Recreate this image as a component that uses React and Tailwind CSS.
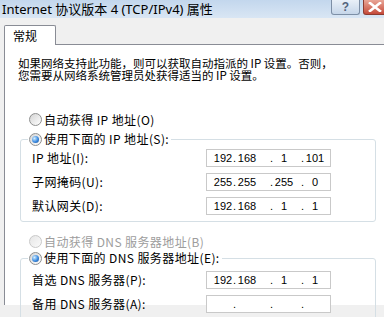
import React from 'react';

const cjk = "font-['Noto_Sans_CJK_SC',sans-serif]";

const Radio = ({ checked, disabled }) => (
  <span
    className={
      disabled
        ? 'flex h-[13px] w-[13px] shrink-0 items-center justify-center rounded-full border border-[#c9c9c9] bg-gradient-to-br from-[#e6e6e6] to-[#fafafa]'
        : 'flex h-[13px] w-[13px] shrink-0 items-center justify-center rounded-full border border-[#8e8f8f] bg-gradient-to-br from-[#d4d4d4] to-[#ffffff]'
    }
  >
    {checked && (
      <span className="h-[7px] w-[7px] rounded-full bg-[radial-gradient(circle_at_35%_35%,#d6f0ff,#3b8ae0_55%,#174a8c)]" />
    )}
  </span>
);

const RadioRow = ({ label, checked, disabled, className = '' }) => (
  <div className={`flex h-[16px] items-center gap-[2px] ${className}`}>
    <Radio checked={checked} disabled={disabled} />
    <span className={disabled ? 'whitespace-nowrap tracking-[0.4px] text-[#9d9d9d]' : 'whitespace-nowrap tracking-[0.4px] text-black'}>
      {label}
    </span>
  </div>
);

const IpBox = ({ parts = ['', '', '', ''] }) => (
  <div className="flex h-[18px] w-[125px] shrink-0 items-center border border-[#c9c9c9] bg-white pl-[6px] font-['Liberation_Sans',sans-serif] text-[11px] leading-[16px] text-black">
    <span className="w-[20px] text-center">{parts[0]}</span>
    <span className="w-[4px]">.</span>
    <span className="w-[20px] text-center">{parts[1]}</span>
    <span className="ml-[13px] w-[4px]">.</span>
    <span className="w-[20px] text-center">{parts[2]}</span>
    <span className="ml-[7px] w-[4px]">.</span>
    <span className="w-[20px] text-center">{parts[3]}</span>
  </div>
);

const Row = ({ label, parts }) => (
  <div className="flex h-[18px] items-center">
    <span className="w-[174px] whitespace-nowrap tracking-[0.4px]">{label}</span>
    <IpBox parts={parts} />
  </div>
);

const Group = ({ legend, className = '', children }) => (
  <fieldset className={`ml-[15px] w-[356px] rounded-[3px] border border-[#d5dfe5] pb-[6px] pl-[11px] ${className}`}>
    <legend className="-ml-[4px] pl-[1px] pr-[2px]">
      <RadioRow label={legend} checked />
    </legend>
    {children}
  </fieldset>
);

export default function App() {
  return (
    <div className={`h-[317px] w-[384px] overflow-hidden bg-[#f0f0f0] text-[12px] leading-[12px] text-black ${cjk}`}>
      {/* title bar */}
      <div className="flex h-[18px] items-start overflow-hidden bg-gradient-to-b from-[#c3d7ed] to-[#d9e6f4]">
        <div className="min-w-0 flex-1 whitespace-nowrap pl-[2px] pt-[1px] font-['Noto_Sans','Noto_Sans_CJK_SC',sans-serif] text-[13px] leading-[16px] text-black">
          Internet 协议版本 4 (TCP/IPv4) 属性
        </div>
        <div className="flex h-[15px] w-[29px] shrink-0 items-center justify-center rounded-b-[3px] border border-t-0 border-[#7d8fa6] bg-gradient-to-b from-[#e9f0f8] to-[#c6d6e9] font-['Liberation_Sans',sans-serif] text-[12px] font-bold leading-none text-[#53647c]">
          ?
        </div>
        <div className="-mr-[3px] ml-[3px] flex h-[15px] w-[24px] shrink-0 items-center justify-center rounded-b-[3px] border border-t-0 border-[#8d3b30] bg-gradient-to-b from-[#e8a597] to-[#c4493a]">
          <svg width="14" height="10" viewBox="0 0 14 10">
            <path d="M2 1 L12 9 M12 1 L2 9" stroke="#ffffff" strokeWidth="2.6" strokeLinecap="square" />
          </svg>
        </div>
      </div>

      {/* tabs */}
      <div className="mt-[7px] flex h-[20px]">
        <div className="ml-[4px] flex w-[52px] items-center rounded-t-[2px] border border-b-0 border-[#898c95] bg-white pl-[8px]">
          常规
        </div>
        <div className="flex-1 border-b border-[#898c95]" />
      </div>

      {/* page */}
      <div className="ml-[4px] flex h-[260px] flex-col border-l border-[#898c95] bg-white">
        <div className="ml-[13px] mt-[12px] flex flex-col whitespace-nowrap text-[11.5px]">
          <div className="h-[12px] leading-[12px]">如果网络支持此功能，则可以获取自动指派的 IP 设置。否则，</div>
          <div className="h-[12px] leading-[12px]">您需要从网络系统管理员处获得适当的 IP 设置。</div>
        </div>

        <RadioRow className="ml-[24px] mt-[32px]" label="自动获得 IP 地址(O)" />

        <Group className="mt-[5px]" legend="使用下面的 IP 地址(S):">
          <div className="mt-[2px] flex flex-col gap-[6px]">
            <Row label="IP 地址(I):" parts={['192', '168', '1', '101']} />
            <Row label="子网掩码(U):" parts={['255', '255', '255', '0']} />
            <Row label="默认网关(D):" parts={['192', '168', '1', '1']} />
          </div>
        </Group>

        <RadioRow className="ml-[24px] mt-[13px]" label="自动获得 DNS 服务器地址(B)" disabled />

        <Group className="mt-[2px]" legend="使用下面的 DNS 服务器地址(E):">
          <div className="mt-[5px] flex flex-col gap-[6px]">
            <Row label="首选 DNS 服务器(P):" parts={['192', '168', '1', '1']} />
            <Row label="备用 DNS 服务器(A):" />
          </div>
        </Group>
      </div>
    </div>
  );
}
